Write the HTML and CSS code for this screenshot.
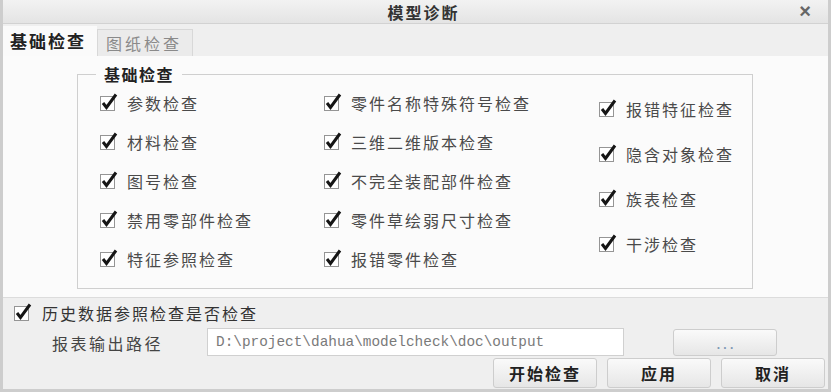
FILE: index.html
```html
<!DOCTYPE html>
<html lang="zh-CN">
<head>
  <meta charset="UTF-8">
  <title>模型诊断</title>
  <link rel="stylesheet" href="styles.css">
</head>
<body>
  <div class="window">
    <div class="titlebar">
      <span class="title">模型诊断</span>
      <span class="close">×</span>
    </div>

    <div class="tabs">
      <div class="tab active">基础检查</div>
      <div class="tab">图纸检查</div>
    </div>

    <div class="panel">
      <fieldset class="group">
        <legend>基础检查</legend>
        <div class="cols">
          <div class="col col1">
            <label class="check"><svg viewBox="0 0 20 20"><rect x="1.5" y="4.5" width="14" height="14"/><path d="M4 11 L7.5 15.5 L17 2.5"/></svg>参数检查</label>
            <label class="check"><svg viewBox="0 0 20 20"><rect x="1.5" y="4.5" width="14" height="14"/><path d="M4 11 L7.5 15.5 L17 2.5"/></svg>材料检查</label>
            <label class="check"><svg viewBox="0 0 20 20"><rect x="1.5" y="4.5" width="14" height="14"/><path d="M4 11 L7.5 15.5 L17 2.5"/></svg>图号检查</label>
            <label class="check"><svg viewBox="0 0 20 20"><rect x="1.5" y="4.5" width="14" height="14"/><path d="M4 11 L7.5 15.5 L17 2.5"/></svg>禁用零部件检查</label>
            <label class="check"><svg viewBox="0 0 20 20"><rect x="1.5" y="4.5" width="14" height="14"/><path d="M4 11 L7.5 15.5 L17 2.5"/></svg>特征参照检查</label>
          </div>
          <div class="col col2">
            <label class="check"><svg viewBox="0 0 20 20"><rect x="1.5" y="4.5" width="14" height="14"/><path d="M4 11 L7.5 15.5 L17 2.5"/></svg>零件名称特殊符号检查</label>
            <label class="check"><svg viewBox="0 0 20 20"><rect x="1.5" y="4.5" width="14" height="14"/><path d="M4 11 L7.5 15.5 L17 2.5"/></svg>三维二维版本检查</label>
            <label class="check"><svg viewBox="0 0 20 20"><rect x="1.5" y="4.5" width="14" height="14"/><path d="M4 11 L7.5 15.5 L17 2.5"/></svg>不完全装配部件检查</label>
            <label class="check"><svg viewBox="0 0 20 20"><rect x="1.5" y="4.5" width="14" height="14"/><path d="M4 11 L7.5 15.5 L17 2.5"/></svg>零件草绘弱尺寸检查</label>
            <label class="check"><svg viewBox="0 0 20 20"><rect x="1.5" y="4.5" width="14" height="14"/><path d="M4 11 L7.5 15.5 L17 2.5"/></svg>报错零件检查</label>
          </div>
          <div class="col col3">
            <label class="check"><svg viewBox="0 0 20 20"><rect x="1.5" y="4.5" width="14" height="14"/><path d="M4 11 L7.5 15.5 L17 2.5"/></svg>报错特征检查</label>
            <label class="check"><svg viewBox="0 0 20 20"><rect x="1.5" y="4.5" width="14" height="14"/><path d="M4 11 L7.5 15.5 L17 2.5"/></svg>隐含对象检查</label>
            <label class="check"><svg viewBox="0 0 20 20"><rect x="1.5" y="4.5" width="14" height="14"/><path d="M4 11 L7.5 15.5 L17 2.5"/></svg>族表检查</label>
            <label class="check"><svg viewBox="0 0 20 20"><rect x="1.5" y="4.5" width="14" height="14"/><path d="M4 11 L7.5 15.5 L17 2.5"/></svg>干涉检查</label>
          </div>
        </div>
      </fieldset>
    </div>

    <div class="bottom">
      <label class="check history"><svg viewBox="0 0 20 20"><rect x="1.5" y="4.5" width="14" height="14"/><path d="M4 11 L7.5 15.5 L17 2.5"/></svg>历史数据参照检查是否检查</label>
      <div class="path-row">
        <span class="path-label">报表输出路径</span>
        <input class="path-input" type="text" value="D:\project\dahua\modelcheck\doc\output">
        <button class="btn browse">. . .</button>
      </div>
      <div class="actions">
        <button class="btn main">开始检查</button>
        <button class="btn main">应用</button>
        <button class="btn main">取消</button>
      </div>
    </div>
  </div>
</body>
</html>
```

FILE: styles.css
```css
body {
  margin: 0;
  background: #efefef;
  font-family: "Noto Sans CJK SC", "Liberation Sans", sans-serif;
}
.window {
  width: 831px;
  height: 392px;
  box-sizing: border-box;
  border-left: 3px solid #cdcdcd;
  border-right: 3px solid #cdcdcd;
  border-bottom: 3px solid #cdcdcd;
  background: #efefef;
  display: flex;
  flex-direction: column;
}
.titlebar {
  height: 23px;
  border-bottom: 1px solid #d2d2d2;
  background: linear-gradient(#f2f2f2, #e4e4e4);
  display: flex;
  align-items: center;
  justify-content: center;
  position: relative;
}
.title {
  font-size: 16px;
  font-weight: bold;
  color: #333;
  letter-spacing: 2px;
  margin-left: 16px;
}
.close {
  position: absolute;
  right: 17px;
  top: 0;
  font-size: 20px;
  line-height: 23px;
  color: #666;
  font-family: "Liberation Sans", sans-serif;
  font-weight: bold;
}
.tabs {
  height: 32px;
  display: flex;
  align-items: flex-end;
}
.tab {
  height: 27px;
  width: 96px;
  padding: 0 0 0 8px;
  font-size: 16px;
  letter-spacing: 3px;
  line-height: 27px;
  color: #8a8a8a;
  background: #ebebeb;
  border: 1px solid #d8d8d8;
  border-bottom: none;
  box-sizing: border-box;
}
.tab.active {
  height: 30px;
  line-height: 30px;
  width: 94px;
  font-size: 17px;
  font-weight: bold;
  letter-spacing: 2px;
  color: #222;
  background: #fafafa;
  border: none;
  padding: 0 0 0 7px;
}
.panel {
  height: 242px;
  background: #fbfbfb;
  border-bottom: 1px solid #dcdcdc;
  padding: 9px 0 0 74px;
  box-sizing: border-box;
}
.group {
  width: 676px;
  height: 224px;
  box-sizing: border-box;
  margin: 0;
  padding: 0 0 0 21px;
  border: 1px solid #cfcfcf;
}
.group legend {
  padding: 0 8px 0 8px;
  font-size: 16px;
  font-weight: bold;
  color: #222;
  letter-spacing: 1.5px;
  line-height: 18px;
  margin-left: -3px;
}
.cols {
  display: flex;
}
.col {
  display: flex;
  flex-direction: column;
}
.col1 {
  width: 224px;
  padding-top: 8px;
  gap: 15px;
}
.col2 {
  width: 275px;
  padding-top: 8px;
  gap: 15px;
}
.col3 {
  padding-top: 14px;
  gap: 21px;
}
.check {
  display: flex;
  align-items: center;
  height: 24px;
  font-size: 16px;
  letter-spacing: 2px;
  color: #4a4a4a;
  white-space: nowrap;
}
.check svg {
  width: 20px;
  height: 20px;
  margin-right: 8px;
  margin-top: -3px;
  flex: none;
}
.check rect {
  fill: #fff;
  stroke: #959595;
  stroke-width: 1;
}
.check path {
  fill: none;
  stroke: #151515;
  stroke-width: 3;
}
.bottom {
  flex: 1;
  display: flex;
  flex-direction: column;
}
.history {
  margin: 3px 0 0 10px;
  color: #333;
}
.history svg {
  margin-right: 9px;
}
.path-row {
  display: flex;
  align-items: center;
  height: 30px;
}
.path-label {
  margin-left: 49px;
  width: 155px;
  font-size: 16px;
  letter-spacing: 2.5px;
  color: #444;
  padding-top: 6px;
}
.path-input {
  width: 417px;
  height: 28px;
  box-sizing: border-box;
  border: 1px solid #d0d0d0;
  background: #fff;
  font-family: "Liberation Mono", monospace;
  font-size: 14.4px;
  color: #7a7a7a;
  padding: 0 8px;
  margin-top: 4px;
}
.btn {
  border: 1px solid #cdcdcd;
  border-radius: 3px;
  background: linear-gradient(#fafafa, #e6e6e6);
  font-family: "Noto Sans CJK SC", sans-serif;
  color: #222;
  padding: 0;
}
.browse {
  width: 104px;
  height: 27px;
  margin: 4px 0 0 49px;
  color: #7f98b5;
  font-family: "Liberation Sans", sans-serif;
  font-size: 12px;
  font-weight: bold;
  padding-top: 6px;
}
.actions {
  display: flex;
  justify-content: flex-end;
  gap: 10px;
  margin: 3px 0 0 0;
  padding-right: 3px;
}
.btn.main {
  width: 104px;
  height: 30px;
  font-size: 16px;
  font-weight: bold;
  letter-spacing: 2px;
}
```
